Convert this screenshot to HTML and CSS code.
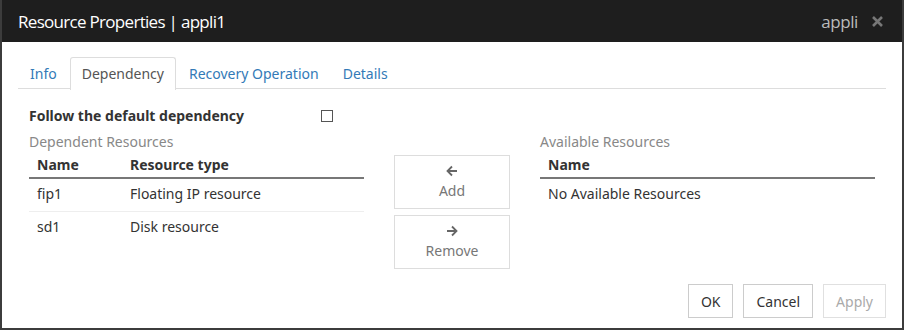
FILE: index.html
```html
<!DOCTYPE html>
<html lang="en">
<head>
    <meta charset="UTF-8">
    <title>Resource Properties</title>
    <link rel="stylesheet" href="styles.css">
</head>
<body>

<div class="dialog">
    <!-- Title bar -->
    <div class="title-bar">
        <span class="title">Resource Properties | appli1</span>
        <span class="title-right">
            <span class="server">appli</span>
            <svg class="close-btn" width="13" height="13" viewBox="0 0 13 13">
                <path d="M2 2 L11 11 M11 2 L2 11" stroke="#777" stroke-width="2.6"/>
            </svg>
        </span>
    </div>

    <div class="dialog-body">
        <!-- Tabs -->
        <ul class="tabs">
            <li class="tab">Info</li>
            <li class="tab active">Dependency</li>
            <li class="tab">Recovery Operation</li>
            <li class="tab">Details</li>
        </ul>

        <div class="follow-row">
            <span class="follow-label">Follow the default dependency</span>
            <span class="checkbox"></span>
        </div>

        <div class="columns">
            <div class="col">
                <div class="caption">Dependent Resources</div>
                <table class="res-table">
                    <thead>
                        <tr>
                            <th class="name-col">Name</th>
                            <th>Resource type</th>
                        </tr>
                    </thead>
                    <tbody>
                        <tr>
                            <td>fip1</td>
                            <td>Floating IP resource</td>
                        </tr>
                        <tr>
                            <td>sd1</td>
                            <td>Disk resource</td>
                        </tr>
                    </tbody>
                </table>
            </div>

            <div class="move-buttons">
                <button class="move-btn">
                    <svg class="arrow" width="12" height="12" viewBox="0 0 12 12">
                        <path d="M11 6 H2 M6 1.5 L1.5 6 L6 10.5" fill="none" stroke="#666" stroke-width="1.8"/>
                    </svg>
                    Add
                </button>
                <button class="move-btn">
                    <svg class="arrow" width="12" height="12" viewBox="0 0 12 12">
                        <path d="M1 6 H10 M6 1.5 L10.5 6 L6 10.5" fill="none" stroke="#666" stroke-width="1.8"/>
                    </svg>
                    Remove
                </button>
            </div>

            <div class="col">
                <div class="caption">Available Resources</div>
                <table class="res-table">
                    <thead>
                        <tr>
                            <th>Name</th>
                        </tr>
                    </thead>
                    <tbody>
                        <tr>
                            <td>No Available Resources</td>
                        </tr>
                    </tbody>
                </table>
            </div>
        </div>

        <div class="footer">
            <button class="btn">OK</button>
            <button class="btn">Cancel</button>
            <button class="btn disabled">Apply</button>
        </div>
    </div>
</div>

</body>
</html>
```

FILE: styles.css
```css
body {
    margin: 0;
    font-family: "Noto Sans", "Liberation Sans", sans-serif;
    font-size: 14px;
    color: #333;
    background: #fff;
}

.dialog {
    width: 900px;
    height: 328px;
    border: 2px solid #3c3c3c;
    border-top: none;
    background: #fff;
}

/* Title bar */
.title-bar {
    height: 42px;
    background-color: #1e1e1e;
    display: flex;
    align-items: center;
    justify-content: space-between;
    padding: 0 18px 0 16px;
}

.title {
    color: #fff;
    font-size: 17px;
    font-family: "Open Sans", sans-serif;
    letter-spacing: -0.7px;
}

.title-right {
    display: flex;
    align-items: center;
    gap: 13px;
}

.server {
    color: #bbb;
    font-size: 17px;
    font-family: "Open Sans", sans-serif;
    letter-spacing: -0.4px;
}

.dialog-body {
    padding: 15px 16px 0 16px;
}

/* Tabs */
.tabs {
    list-style: none;
    margin: 0;
    padding: 0;
    display: flex;
    border-bottom: 1px solid #ddd;
    height: 31px;
}

.tab {
    padding: 0 11px;
    line-height: 31px;
    color: #337ab7;
    border: 1px solid transparent;
    border-bottom: none;
    border-radius: 3px 3px 0 0;
}

.tab.active {
    color: #555;
    border-color: #ddd;
    background: #fff;
    height: 32px;
    margin-left: 1px;
    margin-right: 1px;
}

.follow-row {
    display: flex;
    align-items: center;
    margin: 17px 0 0 11px;
}

.follow-label {
    font-weight: bold;
    font-size: 14px;
    width: 292px;
}

.checkbox {
    width: 10px;
    height: 10px;
    border: 1px solid #555;
}

.columns {
    display: flex;
    margin-left: 11px;
}

.col {
    width: 335px;
}

.caption {
    color: #888;
    margin-top: 7px;
    height: 19px;
}

.res-table {
    width: 100%;
    border-collapse: collapse;
}

.res-table th {
    text-align: left;
    padding: 0 8px;
    height: 26px;
    border-bottom: 2px solid #777;
}

.res-table th.name-col {
    width: 77px;
}

.res-table td {
    padding: 0 8px 3px 8px;
    height: 29px;
}

.res-table tbody tr + tr td {
    border-top: 1px solid #eee;
}

.move-buttons {
    width: 116px;
    margin: 30px 30px 0 30px;
    display: flex;
    flex-direction: column;
    gap: 6px;
}

.move-btn {
    height: 54px;
    background: #fff;
    border: 1px solid #ddd;
    color: #777;
    font-family: inherit;
    font-size: 14px;
    display: flex;
    flex-direction: column;
    align-items: center;
    justify-content: center;
    gap: 4px;
    padding: 0;
}

.footer {
    display: flex;
    justify-content: flex-end;
    gap: 10px;
    margin-top: 15px;
}

.btn {
    height: 34px;
    padding: 0 12px;
    background: #fff;
    border: 1px solid #ccc;
    color: #333;
    font-family: inherit;
    font-size: 14px;
}

.btn.disabled {
    color: #aaa;
    border-color: #e0e0e0;
}
```
